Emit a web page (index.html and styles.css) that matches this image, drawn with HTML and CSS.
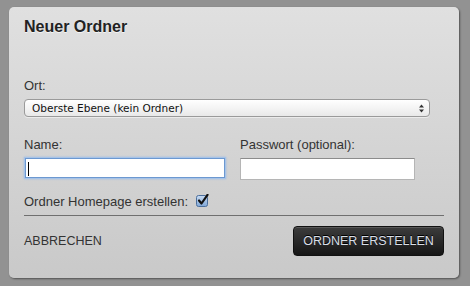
FILE: index.html
```html
<!DOCTYPE html>
<html lang="de">
<head>
    <meta charset="UTF-8">
    <title>Neuer Ordner</title>
    <link rel="stylesheet" href="styles.css">
</head>
<body>
    <div class="dialog">
        <h1>Neuer Ordner</h1>

        <label class="field-label" for="ort">Ort:</label>
        <div class="select-wrap">
            <select id="ort" class="select">
                <option>Oberste Ebene (kein Ordner)</option>
            </select>
            <svg class="select-arrows" width="7" height="9" viewBox="0 0 7 9">
                <path d="M3.5 0.5 L6 3.5 H1 Z M3.5 8.5 L6 5.5 H1 Z" fill="#333"/>
            </svg>
        </div>

        <div class="fields">
            <div class="field">
                <label class="field-label" for="name">Name:</label>
                <div class="input-wrap">
                    <input type="text" id="name" class="input input-focus">
                    <span class="caret"></span>
                </div>
            </div>
            <div class="field">
                <label class="field-label" for="passwort">Passwort (optional):</label>
                <input type="password" id="passwort" class="input">
            </div>
        </div>

        <div class="check-row">
            <span>Ordner Homepage erstellen:</span>
            <svg class="checkbox" width="13" height="13" viewBox="0 0 13 13">
                <defs>
                    <linearGradient id="cb" x1="0" y1="0" x2="0" y2="1">
                        <stop offset="0" stop-color="#c9dcf3"/>
                        <stop offset="1" stop-color="#7fa6d6"/>
                    </linearGradient>
                </defs>
                <rect x="0.5" y="1.5" width="11" height="11" rx="2" fill="url(#cb)" stroke="#4c6f9c"/>
                <path d="M3 6.5 L5.5 9.5 L11.5 0.8" fill="none" stroke="#111" stroke-width="2.2" stroke-linecap="round" stroke-linejoin="round"/>
            </svg>
        </div>

        <div class="actions">
            <a class="cancel" href="#">ABBRECHEN</a>
            <button type="button" class="btn-primary">ORDNER ERSTELLEN</button>
        </div>
    </div>
</body>
</html>
```

FILE: styles.css
```css
body {
    margin: 0;
    padding: 7px 11px 8px 9px;
    background-color: #929292;
    font-family: "Liberation Sans", Arial, sans-serif;
}

.dialog {
    width: 420px;
    height: 250px;
    padding: 10px 15px 11px 15px;
    background: linear-gradient(#e0e0e0, #c9c9c9);
    border-radius: 5px;
    box-shadow: 1px 1px 2px rgba(0, 0, 0, 0.45);
}

h1 {
    margin: 0 0 42px 0;
    font-size: 16px;
    line-height: 19px;
    font-weight: bold;
    color: #222;
    text-shadow: 0 1px 0 rgba(255, 255, 255, 0.7);
}

.field-label {
    display: block;
    font-size: 13px;
    line-height: 15px;
    color: #333;
    margin-bottom: 6px;
}

.select-wrap {
    position: relative;
    width: 406px;
    margin-bottom: 20px;
}

.select {
    appearance: none;
    -webkit-appearance: none;
    display: block;
    width: 406px;
    height: 18px;
    margin: 0;
    padding: 0 0 0 7px;
    border: 1px solid #9a9a9a;
    border-radius: 4px;
    background: linear-gradient(#ffffff, #f4f4f4 50%, #e8e8e8);
    font-family: "DejaVu Sans", sans-serif;
    font-size: 10.5px;
    color: #111;
    box-shadow: 0 1px 0 rgba(255, 255, 255, 0.5);
}

.select-arrows {
    position: absolute;
    right: 5px;
    top: 5px;
}

.fields {
    display: grid;
    grid-template-columns: 202px 175px;
    column-gap: 14px;
}

.input-wrap {
    position: relative;
}

.input {
    display: block;
    box-sizing: border-box;
    width: 175px;
    height: 22px;
    margin: 0;
    padding: 0 3px;
    border: 1px solid #b5b5b5;
    border-top-color: #8c8c8c;
    background-color: #fff;
    outline: none;
}

.input-focus {
    width: 200px;
    margin-left: 1px;
    height: 20px;
    margin-top: 1px;
    border: 1px solid #6c98d0;
    box-shadow: 0 0 0 1px #a6c3e8, 0 0 2px 1px #9bbbe4;
}

.caret {
    position: absolute;
    left: 4px;
    top: 4px;
    width: 1px;
    height: 14px;
    background-color: #000;
}

.check-row {
    display: flex;
    align-items: center;
    gap: 8px;
    margin-top: 14px;
    padding-bottom: 6px;
    border-bottom: 1px solid #6f6f6f;
    font-size: 13px;
    line-height: 15px;
    color: #333;
}

.checkbox {
    display: block;
    margin-top: -2px;
}

.actions {
    display: flex;
    justify-content: space-between;
    align-items: center;
    margin-top: 10px;
}

.cancel {
    font-size: 12.5px;
    color: #333;
    text-decoration: none;
}

.btn-primary {
    width: 151px;
    height: 30px;
    padding: 0;
    border: 1px solid #111;
    border-radius: 4px;
    background: linear-gradient(#3c3c3c, #161616);
    color: #d9dfe8;
    font-family: "Liberation Sans", Arial, sans-serif;
    font-size: 12.5px;
    text-shadow: 0 -1px 0 #000;
    box-shadow: inset 0 1px 0 rgba(255, 255, 255, 0.15);
    cursor: pointer;
}
```
